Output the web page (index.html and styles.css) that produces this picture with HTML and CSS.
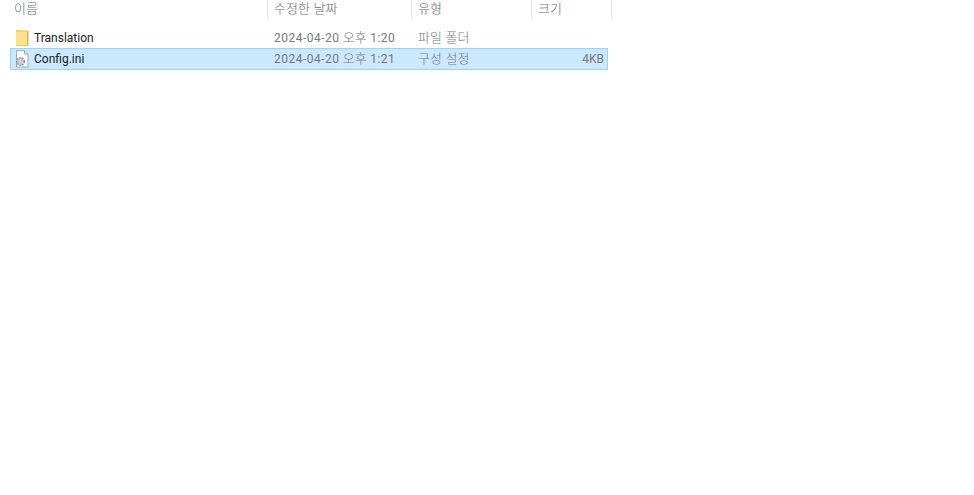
FILE: index.html
```html
<!DOCTYPE html>
<html lang="ko">
<head>
<meta charset="utf-8">
<title>Explorer</title>
<link rel="stylesheet" href="styles.css">
</head>
<body>
<div class="list">
  <div class="header">
    <div class="hcol c-name">이름</div>
    <div class="hcol c-date">수정한 날짜</div>
    <div class="hcol c-type">유형</div>
    <div class="hcol c-size">크기</div>
  </div>
  <div class="rows">
    <div class="row">
      <div class="cell r-name">
        <svg class="icon" viewBox="0 0 16 18" width="16" height="18"><rect x="2" y="1" width="11" height="16" fill="#ffe28c"/><path d="M2 1h5l1 1h5v1h-11z" fill="#f5cf6e"/><rect x="13" y="2" width="1.500" height="15" fill="#e2b04a"/><rect x="2" y="16" width="12" height="1" fill="#eec565"/></svg>
        <span class="fname">Translation</span>
      </div>
      <div class="cell r-date">2024-04-20 <span class="ko">오후</span> 1:20</div>
      <div class="cell r-type">파일 폴더</div>
      <div class="cell r-size"></div>
    </div>
    <div class="row selected">
      <div class="cell r-name">
        <svg class="icon" viewBox="0 0 16 18" width="16" height="18"><path d="M2.500 .5h8l3.500 3.500v13h-11.500z" fill="#fbfcfd" stroke="#a3aab3"/><path d="M10.500 .5v3.500h3.500" fill="#e6eaee" stroke="#a3aab3"/><circle cx="6.500" cy="11.500" r="3.800" fill="none" stroke="#8d949c" stroke-width="1.500" stroke-dasharray="1.600 1.100"/><circle cx="6.500" cy="11.500" r="3" fill="#dfe2e6" stroke="#8d949c" stroke-width=".7"/><circle cx="6.500" cy="11.500" r="1.200" fill="#fff" stroke="#8d949c" stroke-width=".6"/></svg>
        <span class="fname">Config.ini</span>
      </div>
      <div class="cell r-date">2024-04-20 <span class="ko">오후</span> 1:21</div>
      <div class="cell r-type">구성 설정</div>
      <div class="cell r-size">4KB</div>
    </div>
  </div>
</div>
</body>
</html>
```
FILE: styles.css
```css
html, body {
  margin: 0;
  padding: 0;
  background: #fff;
}
body {
  width: 974px;
  height: 495px;
  overflow: hidden;
  font-family: Roboto, "Noto Sans CJK KR", sans-serif;
  font-size: 12px;
  color: #777;
}
.list {
  width: 612px;
}
.header {
  display: flex;
  height: 20px;
}
.hcol {
  box-sizing: border-box;
  border-right: 1px solid #e5e5e5;
  padding-left: 6px;
  line-height: 16px;
  color: #6a6a6a;
  font-size: 13px;
  font-weight: 300;
  font-family: "Noto Sans CJK KR", sans-serif;
}
.c-name { width: 268px; padding-left: 14px; }
.c-date { width: 144px; }
.c-type { width: 120px; }
.c-size { width: 80px; }
.rows {
  display: flex;
  flex-direction: column;
  padding: 7px 0 0 10px;
  width: 598px;
}
.row {
  box-sizing: border-box;
  display: flex;
  align-items: center;
  height: 21px;
  border: 1px solid transparent;
}
.row.selected {
  background: #cce8ff;
  border-color: #99d1ff;
  height: 22px;
}
.cell {
  box-sizing: border-box;
  white-space: nowrap;
  padding-left: 6px;
  line-height: 20px;
}
.r-name {
  width: 257px;
  padding-left: 3px;
  display: flex;
  align-items: center;
  gap: 4px;
}
.fname { color: #222; }
.r-date { width: 144px; letter-spacing: .48px; padding-bottom: 1px; }
.ko {
  font-family: "Noto Sans CJK KR", sans-serif;
  font-size: 13px;
  font-weight: 300;
  letter-spacing: 0;
}
.r-type {
  width: 120px;
  padding-bottom: 2px;
  font-family: "Noto Sans CJK KR", sans-serif;
  font-size: 13px;
  font-weight: 300;
}
.r-size { flex: 1; text-align: right; padding-right: 3px; }
.icon { flex: none; }
```
